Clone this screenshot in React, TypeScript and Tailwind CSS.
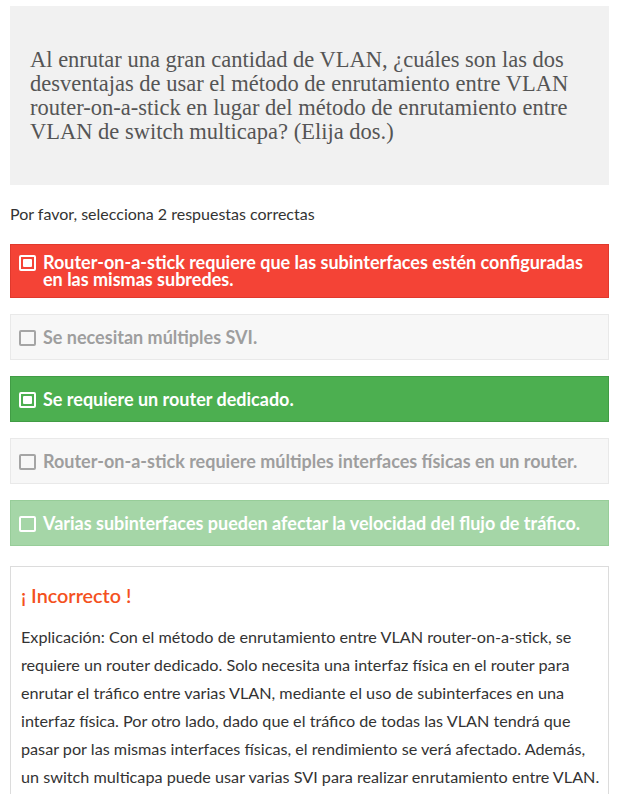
const OPTIONS = [
  {
    text: "Router-on-a-stick requiere que las subinterfaces estén configuradas en las mismas subredes.",
    tone: "wrong",
  },
  { text: "Se necesitan múltiples SVI.", tone: "idle" },
  { text: "Se requiere un router dedicado.", tone: "right" },
  {
    text: "Router-on-a-stick requiere múltiples interfaces físicas en un router.",
    tone: "idle",
  },
  {
    text: "Varias subinterfaces pueden afectar la velocidad del flujo de tráfico.",
    tone: "missed",
  },
];

const TONES: Record<string, { box: string; text: string; check: string; checked: boolean }> = {
  wrong: {
    box: "bg-[#f44336] border-[#e0392d]",
    text: "text-white",
    check: "border-white",
    checked: true,
  },
  right: {
    box: "bg-[#4caf50] border-[#419c45]",
    text: "text-white",
    check: "border-white",
    checked: true,
  },
  missed: {
    box: "bg-[#a5d6a7] border-[#97cd99]",
    text: "text-white",
    check: "border-white",
    checked: false,
  },
  idle: {
    box: "bg-[#f7f7f7] border-[#e9e9e9]",
    text: "text-[#9e9e9e]",
    check: "border-[#a5a5a5]",
    checked: false,
  },
};

function Check({ cls, checked }: { cls: string; checked: boolean }) {
  return (
    <span
      className={`mt-[1px] flex h-[16px] w-[17px] shrink-0 items-center justify-center border-2 rounded-[2px] ${cls}`}
    >
      {checked && <span className="h-[8px] w-[9px] bg-white rounded-[1px]" />}
    </span>
  );
}

export default function App() {
  return (
    <div className="min-h-[794px] bg-white px-[10px] pt-[6px] font-['Lato','Noto_Sans',sans-serif]">
      <div className="flex h-[179px] items-center bg-[#f1f1f1] px-[20px]">
        <p className="whitespace-nowrap font-['Liberation_Serif','DejaVu_Serif',serif] text-[22.5px] leading-[24px] text-[#555]">
          Al enrutar una gran cantidad de VLAN, ¿cuáles son las dos
          <br />
          desventajas de usar el método de enrutamiento entre VLAN
          <br />
          router-on-a-stick en lugar del método de enrutamiento entre
          <br />
          VLAN de switch multicapa? (Elija dos.)
        </p>
      </div>

      <p className="mt-[19px] text-[16px] leading-[20px] text-[#333]">
        Por favor, selecciona 2 respuestas correctas
      </p>

      <div className="mt-[20px] flex flex-col gap-[16px]">
        {OPTIONS.map((o) => {
          const t = TONES[o.tone];
          return (
            <div
              key={o.text}
              className={`flex min-h-[46px] items-center border px-[8px] py-[9px] ${t.box}`}
            >
              <div className="flex items-start gap-[7px]">
                <Check cls={t.check} checked={t.checked} />
                <span className={`text-[18px] font-bold leading-[17px] ${t.text}`}>
                  {o.text}
                </span>
              </div>
            </div>
          );
        })}
      </div>

      <div className="mt-[20px] border border-[#dcdcdc] pl-[10px] pr-[6px] pt-[16px] pb-[10px]">
        <h3 className="text-[19.8px] font-semibold leading-[24px] text-[#f4511e]">¡ Incorrecto !</h3>
        <p className="mt-[16px] text-[16.2px] leading-[28px] text-[#333]">
          Explicación: Con el método de enrutamiento entre VLAN router-on-a-stick, se
          <br />
          requiere un router dedicado. Solo necesita una interfaz física en el router para
          <br />
          enrutar el tráfico entre varias VLAN, mediante el uso de subinterfaces en una
          <br />
          interfaz física. Por otro lado, dado que el tráfico de todas las VLAN tendrá que
          <br />
          pasar por las mismas interfaces físicas, el rendimiento se verá afectado. Además,
          <br />
          un switch multicapa puede usar varias SVI para realizar enrutamiento entre VLAN.
        </p>
      </div>
    </div>
  );
}
